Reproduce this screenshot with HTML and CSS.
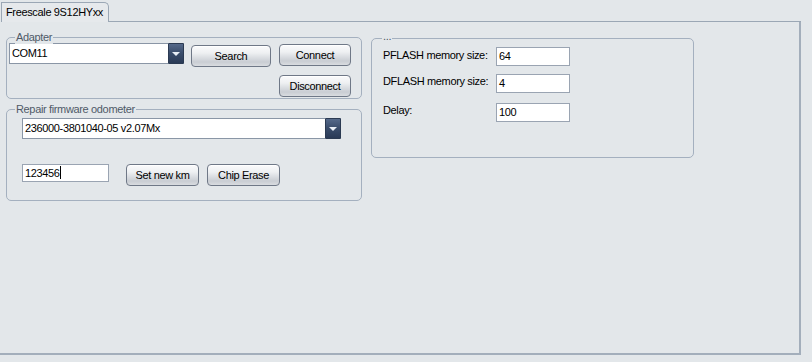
FILE: index.html
```html
<!DOCTYPE html>
<html>
<head>
<meta charset="utf-8">
<link rel="stylesheet" href="styles.css">
</head>
<body>
<div class="tabbar">
  <div class="tab">Freescale 9S12HYxx</div>
  <div class="tabfill"></div>
</div>
<div class="pane">
  <div class="leftcol">
    <div class="group adapter">
      <span class="legend">Adapter</span>
      <div class="combo combo-port"><span class="combo-text">COM11</span><span class="combo-btn"><i></i></span></div>
      <button class="btn btn-search">Search</button>
      <div class="btncol">
        <button class="btn btn-connect">Connect</button>
        <button class="btn btn-disconnect">Disconnect</button>
      </div>
    </div>
    <div class="group repair">
      <span class="legend">Repair firmware odometer</span>
      <div class="combo combo-fw"><span class="combo-text">236000-3801040-05 v2.07Mx</span><span class="combo-btn"><i></i></span></div>
      <div class="kmrow">
        <div class="field field-km">123456<span class="caret"></span></div>
        <button class="btn btn-km">Set new km</button>
        <button class="btn btn-erase">Chip Erase</button>
      </div>
    </div>
  </div>
  <div class="group mem">
    <span class="legend legend-mem">...</span>
    <div class="row row-p"><span class="lbl">PFLASH memory size:</span><div class="field field-num">64</div></div>
    <div class="row row-d"><span class="lbl">DFLASH memory size:</span><div class="field field-num">4</div></div>
    <div class="row row-delay"><span class="lbl">Delay:</span><div class="field field-num">100</div></div>
  </div>
</div>
</body>
</html>
```

FILE: styles.css
```css
* { box-sizing: border-box; }
html, body { margin: 0; padding: 0; }
body {
  background: #e3e7ea;
  font-family: "Liberation Sans", Arial, sans-serif;
  font-size: 11px;
  letter-spacing: -0.35px;
  color: #000;
  width: 812px;
  height: 362px;
  overflow: hidden;
}
.tabbar {
  display: flex;
  height: 22px;
  padding-top: 2px;
  margin-right: 11px;
}
.tab {
  margin-left: 1px;
  width: 108px;
  height: 20px;
  border: 1px solid #9ba7b5;
  border-bottom: none;
  border-top-right-radius: 5px;
  background: #e6e9ec;
  padding: 3px 0 0 4px;
  line-height: 13px;
  white-space: nowrap;
}
.tabfill {
  flex: 1;
  border-bottom: 1px solid #9ba7b5;
}
.pane {
  margin-right: 11px;
  height: 333px;
  border-right: 2px solid #a3aebb;
  border-bottom: 2px solid #a3aebb;
  display: flex;
  align-items: flex-start;
  padding: 15px 0 0 6px;
  gap: 9px;
}
.leftcol {
  width: 356px;
  display: flex;
  flex-direction: column;
  gap: 10px;
}
.group {
  position: relative;
  border: 1px solid #a4b0bf;
  border-radius: 5px;
}
.legend {
  position: absolute;
  top: -8px;
  left: 8px;
  line-height: 14px;
  padding: 0 1px;
  background: #e3e7ea;
  color: #4f5a68;
  white-space: nowrap;
}
.legend-mem { left: 10px; top: -10px; }
.adapter {
  height: 62px;
  display: flex;
  align-items: flex-start;
  padding: 5px 0 0 2px;
}
.combo {
  display: flex;
  height: 21px;
  background: #fff;
  border: 1px solid #8a96a6;
}
.combo-text {
  flex: 1;
  padding-left: 2px;
  line-height: 19px;
  white-space: nowrap;
}
.combo-btn {
  width: 16px;
  margin: -1px -1px -1px 0;
  border: 1px solid #2b3a52;
  border-radius: 1px;
  background: linear-gradient(#55698a 0%, #3b4e6d 45%, #2a3a56 100%);
  display: flex;
  align-items: center;
  justify-content: center;
}
.combo-btn i {
  display: block;
  width: 0;
  height: 0;
  border-left: 4px solid transparent;
  border-right: 4px solid transparent;
  border-top: 4px solid #e8eef6;
  margin-top: 1px;
}
.combo-port { width: 175px; }
.btn {
  font-family: "Liberation Sans", Arial, sans-serif;
  font-size: 11px;
  letter-spacing: -0.35px;
  color: #000;
  height: 22px;
  padding: 0;
  border: 1px solid #6f7887;
  border-radius: 4px;
  background: linear-gradient(#fbfbfc 0%, #eef0f2 35%, #dde0e4 55%, #c9cdd3 80%, #d9dce0 100%);
  box-shadow: inset 0 1px 0 #ffffff;
  line-height: 20px;
  white-space: nowrap;
}
.btn-search { width: 80px; margin: 2px 0 0 7px; }
.btncol {
  display: flex;
  flex-direction: column;
  gap: 9px;
  margin: 1px 0 0 8px;
}
.btn-connect, .btn-disconnect { width: 72px; }
.repair {
  height: 92px;
  padding: 8px 0 0 15px;
}
.combo-fw { width: 319px; }
.kmrow {
  display: flex;
  align-items: flex-start;
  margin-top: 25px;
}
.field {
  height: 19px;
  background: #fff;
  border: 1px solid #9aa4b2;
  padding-left: 2px;
  line-height: 17px;
  white-space: nowrap;
}
.field-km { width: 87px; height: 18px; line-height: 16px; }
.caret {
  display: inline-block;
  width: 1px;
  height: 13px;
  background: #000;
  vertical-align: -2px;
}
.btn-km { width: 73px; margin-left: 17px; }
.btn-erase { width: 73px; margin-left: 8px; }
.mem {
  width: 323px;
  height: 120px;
  margin-top: 1px;
  padding: 8px 0 0 11px;
}
.row {
  display: flex;
  align-items: flex-start;
}
.lbl {
  width: 113px;
  line-height: 14px;
  white-space: nowrap;
}
.field-num { width: 74px; }
.row-p .lbl { margin-top: 1px; }
.row-d { margin-top: 8px; }
.row-d .lbl { margin-top: 0; }
.row-delay { margin-top: 10px; }
.row-delay .lbl { margin-top: 0; }
```
